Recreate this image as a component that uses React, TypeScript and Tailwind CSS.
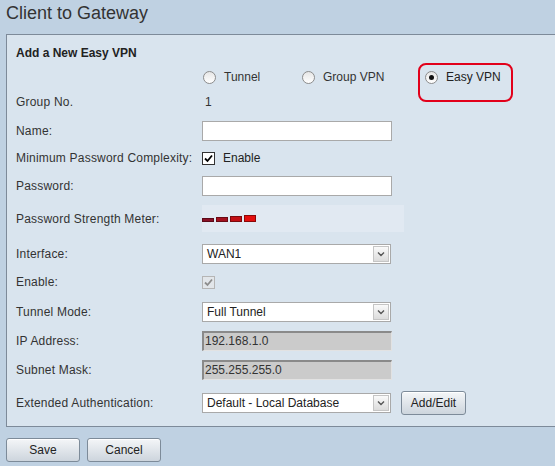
import React from 'react'

const font = { fontFamily: '"Liberation Sans", Arial, sans-serif' }

function Radio({ checked }: { checked?: boolean }) {
  return (
    <span className="w-[13px] h-[13px] shrink-0 rounded-full border border-[#8c8c8c] bg-gradient-to-b from-[#e6e6e6] to-white flex items-center justify-center">
      {checked && <span className="w-[5px] h-[5px] rounded-full bg-[#111]" />}
    </span>
  )
}

function TextBox({ value, disabled }: { value?: string; disabled?: boolean }) {
  return disabled ? (
    <div className="w-[190px] h-[20px] bg-[#cbcbcb] border border-[#e2e2e2] border-t-[#8a8a8a] border-l-[#8a8a8a] border-t-2 border-l-2 flex items-center px-px text-[12px] text-[#333]">
      {value}
    </div>
  ) : (
    <div className="w-[190px] h-[20px] bg-white border border-[#a9a9a9]" />
  )
}

function Select({ value }: { value: string }) {
  return (
    <div className="w-[189px] h-[20px] bg-white border border-[#a9a9a9] flex items-center">
      <span className="flex-1 pl-[4px] text-[12px] text-[#222]">{value}</span>
      <span className="w-[16px] h-[16px] mr-px bg-gradient-to-b from-[#fafafa] to-[#dcdcdc] border border-[#c5c5c5] flex items-center justify-center">
        <svg width="8" height="6" viewBox="0 0 8 6">
          <path d="M1 1.5 L4 4.5 L7 1.5" fill="none" stroke="#555" strokeWidth="1.4" />
        </svg>
      </span>
    </div>
  )
}

function Check({ disabled }: { disabled?: boolean }) {
  return (
    <span
      className={
        'w-[13px] h-[13px] border flex items-center justify-center ' +
        (disabled ? 'border-[#b5b5b5] bg-[#e2e6ea]' : 'border-[#333] bg-white')
      }
    >
      <svg width="9" height="9" viewBox="0 0 9 9">
        <path
          d="M1 4.5 L3.5 7 L8 1.5"
          fill="none"
          stroke={disabled ? '#8d8d8d' : '#000'}
          strokeWidth="1.8"
        />
      </svg>
    </span>
  )
}

function Button({ label, w }: { label: string; w: string }) {
  return (
    <button
      className={
        w +
        ' h-[24px] rounded-[3px] border border-[#7d8b99] bg-gradient-to-b from-[#f4f6f8] to-[#cdd5dd] text-[12px] text-[#222] shadow-[inset_0_1px_0_#fff]'
      }
    >
      {label}
    </button>
  )
}

function Row({ label, h, children }: { label: string; h: string; children?: React.ReactNode }) {
  return (
    <div className={'flex items-center ' + h}>
      <span className="w-[186px] shrink-0 tracking-[0.2px]">{label}</span>
      {children}
    </div>
  )
}

export default function App() {
  return (
    <div className="w-[555px] h-[466px] bg-[#bfd1e2] overflow-hidden text-[12px] text-[#333]" style={font}>
      <h1 className="h-[34px] pl-[6px] pt-[2px] text-[18px] leading-[22px] text-[#333]">Client to Gateway</h1>
      <div className="ml-[6px] w-[560px] bg-[#d9e4ee] border-t border-l border-b border-[#7d8a99] pl-[9px] pb-[3px]">
        <div className="h-[36px] flex items-center font-bold text-[#222]">Add a New Easy VPN</div>
        <div className="h-[12px] flex items-center pl-[187px]">
          <span className="w-[99px] shrink-0 flex items-center gap-[8px]">
            <Radio /> Tunnel
          </span>
          <span className="w-[116px] shrink-0 flex items-center gap-[8px]">
            <Radio /> Group VPN
          </span>
          <span className="w-[95px] h-[39px] mt-[10px] pb-[10px] shrink-0 border-2 border-[#e2001a] rounded-[8px] flex items-center pl-[5px] gap-[8px] text-[#222]">
            <Radio checked /> Easy VPN
          </span>
        </div>
        <Row label="Group No." h="h-[38px]">
          <span className="pl-[3px]">1</span>
        </Row>
        <Row label="Name:" h="h-[19px]">
          <TextBox />
        </Row>
        <Row label="Minimum Password Complexity:" h="h-[36px]">
          <Check />
          <span className="ml-[8px] text-[#222]">Enable</span>
        </Row>
        <Row label="Password:" h="h-[19px]">
          <TextBox />
        </Row>
        <Row label="Password Strength Meter:" h="h-[47px]">
          <div className="w-[202px] h-[27px] bg-[#e1e9f2] flex items-center gap-[2px]">
            <span className="w-[12px] h-[4px] mt-[3px] bg-[#8a1026] border border-[#5c0a18]" />
            <span className="w-[12px] h-[5px] mt-[2px] bg-[#a3101e] border border-[#6a0a14]" />
            <span className="w-[12px] h-[6px] mt-px bg-[#c20e14] border border-[#7a0a0e]" />
            <span className="w-[12px] h-[7px] bg-[#e40e0e] border border-[#8a0808]" />
          </div>
        </Row>
        <Row label="Interface:" h="h-[23px]">
          <Select value="WAN1" />
        </Row>
        <Row label="Enable:" h="h-[34px]">
          <Check disabled />
        </Row>
        <Row label="Tunnel Mode:" h="h-[25px]">
          <Select value="Full Tunnel" />
        </Row>
        <Row label="IP Address:" h="h-[33px]">
          <TextBox disabled value="192.168.1.0" />
        </Row>
        <Row label="Subnet Mask:" h="h-[25px]">
          <TextBox disabled value="255.255.255.0" />
        </Row>
        <Row label="Extended Authentication:" h="h-[41px]">
          <Select value="Default - Local Database" />
          <span className="ml-[10px]">
            <Button label="Add/Edit" w="w-[65px]" />
          </span>
        </Row>
      </div>
      <div className="flex gap-[7px] pl-[6px] pt-[11px]">
        <Button label="Save" w="w-[74px]" />
        <Button label="Cancel" w="w-[74px]" />
      </div>
    </div>
  )
}
